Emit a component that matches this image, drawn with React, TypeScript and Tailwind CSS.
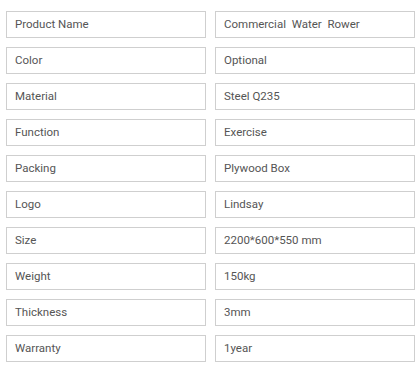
const rows: [string, string][] = [
  ['Product Name', 'Commercial  Water  Rower'],
  ['Color', 'Optional'],
  ['Material', 'Steel Q235'],
  ['Function', 'Exercise'],
  ['Packing', 'Plywood Box'],
  ['Logo', 'Lindsay'],
  ['Size', '2200*600*550 mm'],
  ['Weight', '150kg'],
  ['Thickness', '3mm'],
  ['Warranty', '1year'],
];

export default function App() {
  return (
    <div className="min-h-[372px] w-[418px] bg-white pl-[6px] pt-[11px] font-['Roboto',sans-serif] text-[11.5px] text-[#555]">
      <div className="grid grid-cols-[200px_200px] gap-[9px]">
        {rows.map(([k, v]) => (
          <div key={k} className="contents">
            <div className="flex h-[27px] items-center whitespace-pre border border-[#cfcfcf] px-[8px]">{k}</div>
            <div className="flex h-[27px] items-center whitespace-pre border border-[#cfcfcf] px-[8px]">{v}</div>
          </div>
        ))}
      </div>
    </div>
  );
}
